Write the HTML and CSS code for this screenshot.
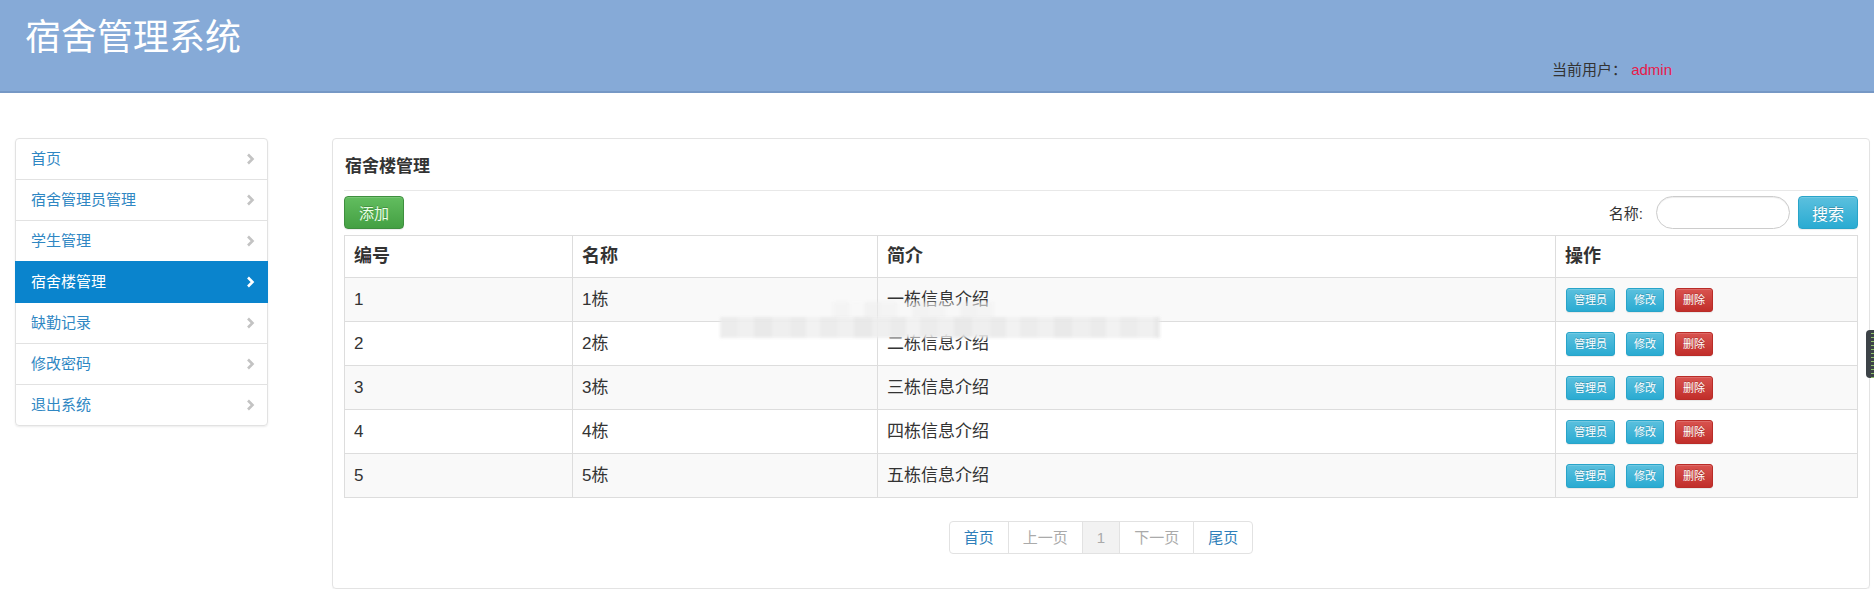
FILE: index.html
```html
<!DOCTYPE html>
<html lang="zh-CN">

<head>
    <meta charset="UTF-8" />
    <meta name="viewport" content="width=device-width, initial-scale=1.0" />
    <title>宿舍管理系统</title>
    <link rel="stylesheet" href="styles.css">
</head>

<body>
    <div class="header">
        <h1 class="brand">宿舍管理系统</h1>
        <div class="user">当前用户： <span class="user-name">admin</span></div>
    </div>

    <div class="main">
        <div class="sidebar">
            <a class="nav-item" href="#">首页<svg class="chevron" viewBox="0 0 9 12"><polyline points="2,1.5 6.5,6 2,10.5" /></svg></a>
            <a class="nav-item" href="#">宿舍管理员管理<svg class="chevron" viewBox="0 0 9 12"><polyline points="2,1.5 6.5,6 2,10.5" /></svg></a>
            <a class="nav-item" href="#">学生管理<svg class="chevron" viewBox="0 0 9 12"><polyline points="2,1.5 6.5,6 2,10.5" /></svg></a>
            <a class="nav-item active" href="#">宿舍楼管理<svg class="chevron" viewBox="0 0 9 12"><polyline points="2,1.5 6.5,6 2,10.5" /></svg></a>
            <a class="nav-item" href="#">缺勤记录<svg class="chevron" viewBox="0 0 9 12"><polyline points="2,1.5 6.5,6 2,10.5" /></svg></a>
            <a class="nav-item" href="#">修改密码<svg class="chevron" viewBox="0 0 9 12"><polyline points="2,1.5 6.5,6 2,10.5" /></svg></a>
            <a class="nav-item" href="#">退出系统<svg class="chevron" viewBox="0 0 9 12"><polyline points="2,1.5 6.5,6 2,10.5" /></svg></a>
        </div>

        <div class="panel">
            <div class="panel-title">宿舍楼管理</div>
            <div class="toolbar">
                <button type="button" class="btn btn-success btn-add">添加</button>
                <form class="search">
                    <label for="s_name">名称:</label>
                    <input id="s_name" type="text" class="search-input" />
                    <button type="button" class="btn btn-info btn-search">搜索</button>
                </form>
            </div>

            <div class="table-wrap">
                <table class="data-table">
                    <colgroup>
                        <col class="col-id">
                        <col class="col-name">
                        <col class="col-desc">
                        <col>
                    </colgroup>
                    <thead>
                        <tr><th>编号</th><th>名称</th><th>简介</th><th>操作</th></tr>
                    </thead>
                    <tbody>
                        <tr>
                            <td>1</td><td>1栋</td><td>一栋信息介绍</td>
                            <td><div class="ops"><button class="btn btn-info btn-xs">管理员</button><button class="btn btn-info btn-xs">修改</button><button class="btn btn-danger btn-xs">删除</button></div></td>
                        </tr>
                        <tr>
                            <td>2</td><td>2栋</td><td>二栋信息介绍</td>
                            <td><div class="ops"><button class="btn btn-info btn-xs">管理员</button><button class="btn btn-info btn-xs">修改</button><button class="btn btn-danger btn-xs">删除</button></div></td>
                        </tr>
                        <tr>
                            <td>3</td><td>3栋</td><td>三栋信息介绍</td>
                            <td><div class="ops"><button class="btn btn-info btn-xs">管理员</button><button class="btn btn-info btn-xs">修改</button><button class="btn btn-danger btn-xs">删除</button></div></td>
                        </tr>
                        <tr>
                            <td>4</td><td>4栋</td><td>四栋信息介绍</td>
                            <td><div class="ops"><button class="btn btn-info btn-xs">管理员</button><button class="btn btn-info btn-xs">修改</button><button class="btn btn-danger btn-xs">删除</button></div></td>
                        </tr>
                        <tr>
                            <td>5</td><td>5栋</td><td>五栋信息介绍</td>
                            <td><div class="ops"><button class="btn btn-info btn-xs">管理员</button><button class="btn btn-info btn-xs">修改</button><button class="btn btn-danger btn-xs">删除</button></div></td>
                        </tr>
                    </tbody>
                </table>
                <!-- blurred watermark that sits over rows 1-2 -->
                <div class="mosaic mosaic-top"></div>
                <div class="mosaic mosaic-band"></div>
            </div>

            <ul class="pagination">
                <li><a href="#">首页</a></li>
                <li class="disabled"><a href="#">上一页</a></li>
                <li class="current"><a href="#">1</a></li>
                <li class="disabled"><a href="#">下一页</a></li>
                <li><a href="#">尾页</a></li>
            </ul>
        </div>
    </div>

    <div class="side-widget"></div>
</body>

</html>
```

FILE: styles.css
```css
body {
  margin: 0;
  font-family: "Liberation Sans", "Noto Sans CJK SC", sans-serif;
  color: #333;
  background-color: #fff;
}

/* top bar */
.header {
  height: 91px;
  display: flex;
  justify-content: space-between;
  padding: 0 202px 0 25px;
  background-color: #86aad7;
  border-bottom: 2px solid #7698c5;
}

.brand {
  margin: 0;
  padding-top: 16px;
  font-size: 36px;
  line-height: 44px;
  font-weight: normal;
  color: #fff;
}

.user {
  align-self: flex-end;
  padding-bottom: 11px;
  font-size: 15px;
  line-height: 20px;
  color: #333;
}

.user-name {
  color: #e8194a;
}

/* page body */
.main {
  display: flex;
  align-items: flex-start;
  gap: 64px;
  padding: 45px 4px 0 15px;
}

.sidebar {
  width: 253px;
  flex-shrink: 0;
  border-radius: 4px;
  box-shadow: 0 1px 2px rgba(0, 0, 0, 0.08);
}

.nav-item {
  display: flex;
  justify-content: space-between;
  align-items: center;
  padding: 10px 12px 10px 15px;
  margin-bottom: -1px;
  line-height: 20px;
  font-size: 15px;
  color: #2f87c3;
  text-decoration: none;
  background-color: #fff;
  border: 1px solid #e2e2e2;
}

.nav-item:first-child {
  border-radius: 4px 4px 0 0;
}

.nav-item:last-child {
  margin-bottom: 0;
  border-radius: 0 0 4px 4px;
}

.nav-item.active {
  position: relative;
  color: #fff;
  background-color: #0a84cd;
  border-color: #0a84cd;
}

.chevron {
  width: 9px;
  height: 12px;
  fill: none;
  stroke: #c3c3c3;
  stroke-width: 2.6;
}

.nav-item.active .chevron {
  stroke: #fff;
}

/* content panel */
.panel {
  flex: 1;
  padding: 0 11px 34px 11px;
  border: 1px solid #e3e3e3;
  border-radius: 4px;
  box-shadow: 0 1px 1px rgba(0, 0, 0, 0.05);
}

.panel-title {
  padding: 16px 0 11px 1px;
  font-size: 17px;
  line-height: 24px;
  font-weight: bold;
  border-bottom: 1px solid #e8e8e8;
}

.toolbar {
  display: flex;
  justify-content: space-between;
  align-items: center;
  margin: 5px 0 6px;
}

.btn {
  font-family: inherit;
  color: #fff;
  cursor: pointer;
  border: 1px solid transparent;
  border-radius: 4px;
  text-shadow: 0 -1px 0 rgba(0, 0, 0, 0.2);
  box-shadow: inset 0 1px 0 rgba(255, 255, 255, 0.15), 0 1px 1px rgba(0, 0, 0, 0.075);
}

.btn-success {
  background-image: linear-gradient(#62bd5f, #44a043);
  border-color: #3e8f3e;
  color: #eaffe6;
}

.btn-info {
  background-image: linear-gradient(#5bc0de, #2aabd2);
  border-color: #28a4c9;
}

.btn-danger {
  background-image: linear-gradient(#d9534f, #c12e2a);
  border-color: #b92c28;
}

.btn-add {
  height: 33px;
  padding: 0 14px;
  font-size: 15px;
}

.search {
  display: flex;
  align-items: center;
  margin: 0;
}

.search label {
  font-size: 15px;
  margin-right: 13px;
}

.search-input {
  width: 134px;
  height: 33px;
  box-sizing: border-box;
  padding: 0 12px;
  border: 1px solid #ccc;
  border-radius: 17px;
  box-shadow: inset 0 1px 1px rgba(0, 0, 0, 0.075);
}

.btn-search {
  width: 60px;
  height: 33px;
  margin-left: 8px;
  font-size: 16px;
}

/* table */
.table-wrap {
  position: relative;
}

.data-table {
  width: 100%;
  border-collapse: collapse;
  border: 1px solid #ddd;
}

.col-id {
  width: 228px;
}

.col-name {
  width: 305px;
}

.col-desc {
  width: 678px;
}

.data-table th {
  padding: 8px 9px;
  text-align: left;
  font-size: 18px;
  line-height: 25px;
  border: 1px solid #ddd;
}

.data-table td {
  padding: 8px 9px;
  font-size: 17px;
  line-height: 27px;
  border: 1px solid #ddd;
}

.data-table tbody tr:nth-child(odd) {
  background-color: #f9f9f9;
}

.ops {
  display: flex;
  align-items: center;
  gap: 11px;
  height: 27px;
  padding-left: 1px;
}

.btn-xs {
  height: 24px;
  padding: 0 7px;
  font-size: 11px;
  line-height: 22px;
  border-radius: 3px;
}

.mosaic {
  position: absolute;
  filter: blur(1.5px);
}

.mosaic-top {
  left: 489px;
  top: 67px;
  width: 160px;
  height: 17px;
  background-image: repeating-linear-gradient(90deg, rgba(240, 240, 240, 0.6) 0 16px, rgba(246, 246, 246, 0.5) 16px 32px, rgba(236, 236, 236, 0.6) 32px 48px);
}

.mosaic-band {
  left: 376px;
  top: 82px;
  width: 440px;
  height: 21px;
  background-image: repeating-linear-gradient(90deg, #ebebeb 0 18px, #efefef 18px 34px, #e8e8e8 34px 52px, #eeeeee 52px 70px, #eaeaea 70px 86px, #f1f1f1 86px 100px);
  opacity: 0.92;
}

/* pager */
.pagination {
  display: flex;
  justify-content: center;
  margin: 23px 0 0;
  padding: 0;
  list-style: none;
}

.pagination li a {
  display: block;
  height: 31px;
  padding: 0 14px;
  margin-left: -1px;
  font-size: 15px;
  line-height: 31px;
  color: #2f7fba;
  text-decoration: none;
  background-color: #fff;
  border: 1px solid #e2e2e2;
}

.pagination li:first-child a {
  margin-left: 0;
  border-radius: 4px 0 0 4px;
}

.pagination li:last-child a {
  border-radius: 0 4px 4px 0;
}

.pagination .disabled a {
  color: #aaa;
}

.pagination .current a {
  color: #aaa;
  background-color: #f2f2f2;
}

/* little widget stuck on the right edge */
.side-widget {
  position: absolute;
  top: 330px;
  right: 0;
  width: 8px;
  height: 48px;
  border-radius: 4px 0 0 4px;
  background-color: #3d4348;
  background-image: repeating-linear-gradient(#3d4348 0 3px, #8fbf6a 3px 4px);
  background-size: 3px 100%;
  background-position: 5px 0;
  background-repeat: no-repeat;
}
```
